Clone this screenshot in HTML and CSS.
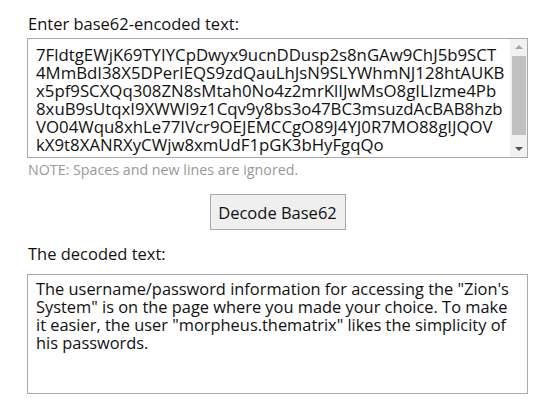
FILE: index.html
```html
<!DOCTYPE html>
<html>
<head>
<meta charset="utf-8">
<link rel="stylesheet" href="styles.css">
</head>
<body>
<div class="page">
  <label class="label" for="enc">Enter base62-encoded text:</label>
  <div class="field field-enc">
    <textarea id="enc" class="box box-enc" wrap="off" spellcheck="false">7FldtgEWjK69TYIYCpDwyx9ucnDDusp2s8nGAw9ChJ5b9SCT
4MmBdI38X5DPerIEQS9zdQauLhJsN9SLYWhmNJ128htAUKB
x5pf9SCXQq308ZN8sMtah0No4z2mrKlIJwMsO8gILIzme4Pb
8xuB9sUtqxI9XWWl9z1Cqv9y8bs3o47BC3msuzdAcBAB8hzb
VO04Wqu8xhLe77IVcr9OEJEMCCgO89J4YJ0R7MO88gIJQOV
kX9t8XANRXyCWjw8xmUdF1pGK3bHyFgqQo</textarea>
    <div class="scrollbar" aria-hidden="true">
      <div class="sb-btn sb-up"><span class="arrow arrow-up"></span></div>
      <div class="sb-track"><div class="sb-thumb"></div></div>
      <div class="sb-btn sb-down"><span class="arrow arrow-down"></span></div>
    </div>
  </div>
  <div class="note">NOTE: Spaces and new lines are ignored.</div>
  <div class="actions"><button class="btn" type="button">Decode Base62</button></div>
  <label class="label label-out" for="dec">The decoded text:</label>
  <div class="field field-dec">
    <textarea id="dec" class="box box-dec" spellcheck="false">The username/password information for accessing the "Zion's System" is on the page where you made your choice. To make it easier, the user "morpheus.thematrix" likes the simplicity of his passwords.</textarea>
  </div>
</div>
</body>
</html>
```
FILE: styles.css
```css
html, body {
  margin: 0;
  padding: 0;
  background: #fff;
}
.page {
  padding: 14px 29px 0 27px;
  display: flex;
  flex-direction: column;
  align-items: flex-start;
  font-family: "Open Sans", "Noto Sans", sans-serif;
  color: #111;
}
.label {
  font-size: 16.5px;
  line-height: 20px;
  padding-left: 1px;
  margin-bottom: 4px;
}
.label-out {
  margin-top: 14px;
  margin-bottom: 10px;
}
.field {
  box-sizing: border-box;
  width: 501px;
  border: 1px solid #a9a9a9;
  display: flex;
  background: #fff;
}
.field-enc {
  height: 120px;
}
.field-dec {
  height: 120px;
}
.box {
  flex: 1;
  min-width: 0;
  border: 0;
  padding: 8px 8px;
  font-family: "Open Sans", "Noto Sans", sans-serif;
  line-height: 18px;
  color: #111;
  resize: none;
  outline: none;
  margin: 0;
  overflow: hidden;
  background: transparent;
}
.box-enc {
  font-size: 16.8px;
  padding-top: 7px;
  padding-right: 0;
  white-space: pre;
}
.box-dec {
  font-size: 16.4px;
  padding-top: 5px;
  padding-right: 10px;
}
.scrollbar {
  width: 17px;
  flex: none;
  display: flex;
  flex-direction: column;
  background: #f1f1f1;
}
.sb-btn {
  height: 17px;
  flex: none;
  display: flex;
  align-items: center;
  justify-content: center;
}
.sb-track {
  flex: 1;
  padding: 0 1px 4px 2px;
  display: flex;
  flex-direction: column;
}
.sb-thumb {
  height: 79px;
  background: #c1c1c1;
}
.arrow {
  width: 0;
  height: 0;
  border-left: 4px solid transparent;
  border-right: 4px solid transparent;
}
.arrow-up {
  border-bottom: 4px solid #a3a3a3;
  margin-top: -2px;
}
.arrow-down {
  border-top: 4px solid #505050;
  margin-top: 1px;
}
.note {
  font-size: 14.25px;
  line-height: 18px;
  color: #999;
  padding-left: 1px;
  margin-top: 3px;
}
.actions {
  align-self: stretch;
  width: 501px;
  display: flex;
  justify-content: center;
  margin-top: 15px;
}
.btn {
  font-family: "Open Sans", "Noto Sans", sans-serif;
  font-size: 16.5px;
  color: #111;
  background: #efefef;
  border: 1px solid #a9a9a9;
  border-radius: 0;
  width: 136px;
  height: 36px;
  padding: 0;
}
```
